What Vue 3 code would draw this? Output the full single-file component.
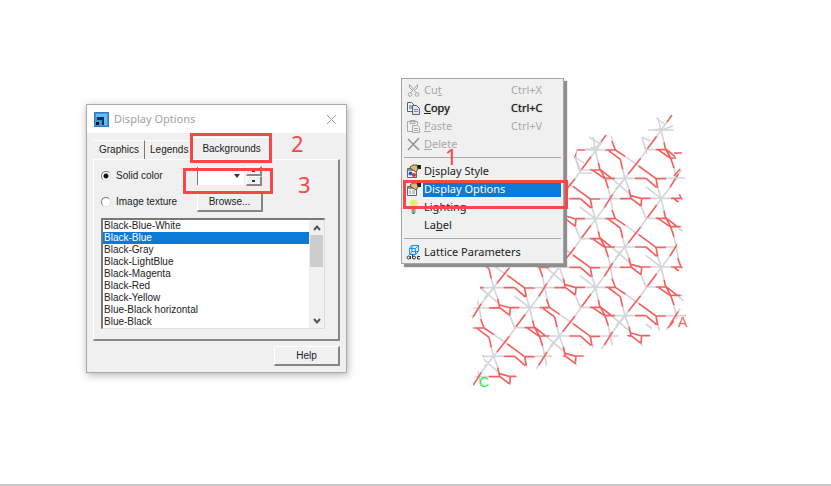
<script setup>
import { ref } from 'vue'

const tabs = ['Graphics', 'Legends', 'Backgrounds']
const gradients = [
  'Black-Blue-White', 'Black-Blue', 'Black-Gray', 'Black-LightBlue', 'Black-Magenta',
  'Black-Red', 'Black-Yellow', 'Blue-Black horizontal', 'Blue-Black',
]
const selected = ref('Black-Blue')
const fill = ref('solid')

const menuGroups = [
  [
    { pre: 'Cu', key: 't', post: '', hint: 'Ctrl+X', icon: 'cut', off: true },
    { pre: '', key: 'C', post: 'opy', hint: 'Ctrl+C', icon: 'copy', strong: true },
    { pre: '', key: 'P', post: 'aste', hint: 'Ctrl+V', icon: 'paste', off: true },
    { pre: '', key: 'D', post: 'elete', icon: 'delete', off: true },
  ],
  [
    { pre: 'D', key: 'i', post: 'splay Style', icon: 'style' },
    { pre: 'Display Options', key: '', post: '', icon: 'options', active: true },
    { pre: 'Li', key: 'g', post: 'hting', icon: 'light' },
    { pre: 'La', key: 'b', post: 'el', icon: '' },
  ],
  [{ pre: 'Lattice Parameters', key: '', post: '', icon: 'lattice' }],
]

// Bonds of one unit cell; lattice vectors are (197,-61) and (0,206)
const greyBonds = [
  [0, 0, 30, 0], [-74, 61, -15, 61], [77, 60, 138, 60], [190, 118, 197, 145],
  [198, 80, 238, 108], [-30, 0, 0, 0], [-135, -25, -105, -25], [-50, 30, -37, 94],
  [-43, -2, 12, 45], [0, 0, 12, 33], [48, 83, 63, 120], [0, 0, -37, 48],
  [-62, 88, -102, 141], [-133, 183, -150, 207], [-187, 254, -197, 267],
  [108, 60, 117, 98], [108, 60, 97, 23], [62, 25, 108, 60], [-28, 32, 0, 0],
]
const redBonds = [
  [30, 0, 63, 0], [93, 1, 123, 1], [-15, 61, 18, 60], [50, 60, 77, 60], [138, 60, 168, 60],
  [168, 60, 158, 33], [168, 60, 198, 80], [148, 62, 183, 88], [183, 88, 190, 118],
  [41, -37, 93, 1], [63, 0, 95, 28], [93, 1, 98, 28], [-60, 0, -30, 0], [-60, 0, -75, -27],
  [-105, -25, -75, -25], [-75, -27, -43, -2], [-98, -25, -62, 0], [-60, 0, -50, 30],
  [12, 33, 18, 60], [18, 60, 48, 83], [18, 52, 50, 61], [48, 83, 50, 60],
  [-37, 48, -62, 88], [-102, 141, -133, 183], [-150, 207, -187, 254],
  [117, 98, 122, 120], [97, 23, 93, 1],
]
const toPath = (bonds) => bonds.map(([a, b, c, d]) => `M${a} ${b}L${c} ${d}`).join('')
const greyPath = toPath(greyBonds)
const redPath = toPath(redBonds)
const cells = []
for (let i = -4; i <= 2; i++) {
  for (let j = -4; j <= 5; j++) cells.push({ id: `${i}:${j}`, x: 459 + i * 197, y: 426 - i * 61 + j * 206 })
}
</script>

<template>
  <main class="scene">
    <section class="dialog" aria-label="Display Options">
      <header class="titlebar">
        <svg class="app-icon" viewBox="0 0 15 15" aria-hidden="true">
          <rect width="15" height="15" fill="#3f97de" />
          <path d="M2 2h11v11h-3V5H2z" fill="#63bdf7" />
          <path d="M3 5h7v8H8V8H3z" fill="#17324d" />
          <path d="M2 10h3v3H2z" fill="#0b0f18" />
          <path d="M.5 .5h14v14H.5z" fill="none" stroke="#3a78b5" />
        </svg>
        <h1>Display Options</h1>
        <button class="close" type="button" aria-label="Close">
          <svg viewBox="0 0 11 11"><path d="M1 1l9 9M10 1l-9 9" stroke="#a0a0a0" fill="none" /></svg>
        </button>
      </header>

      <div class="content">
        <div class="tabs" role="tablist">
          <button v-for="t in tabs" :key="t" type="button" role="tab" :aria-selected="t === 'Backgrounds'" :class="{ current: t === 'Backgrounds' }">{{ t }}</button>
          <span class="mark mark-tab"></span>
          <span class="step step-two">2</span>
        </div>
        <div class="panel">
          <div class="row">
            <label><input v-model="fill" type="radio" value="solid" name="fill">Solid color</label>
            <div class="picker">
              <select aria-label="Solid color"><option></option></select>
              <svg class="arrow" viewBox="0 0 6 4" aria-hidden="true"><path d="M0 0h6L3 4z" fill="#333" /></svg>
              <div class="spin">
                <button type="button" aria-label="Increase"><i></i></button>
                <button type="button" aria-label="Decrease"><i></i></button>
              </div>
              <span class="mark mark-color"></span>
              <span class="step step-three">3</span>
            </div>
          </div>
          <div class="row">
            <label><input v-model="fill" type="radio" value="image" name="fill">Image texture</label>
            <button class="push" type="button">Browse...</button>
          </div>
          <div class="listbox">
            <ul role="listbox" aria-label="Gradients">
              <li v-for="g in gradients" :key="g" role="option" :aria-selected="g === selected" :class="{ picked: g === selected }" @click="selected = g">{{ g }}</li>
            </ul>
            <div class="scroll">
              <svg viewBox="0 0 8 6"><path d="M1 5l3-3.500 3 3.500" fill="none" stroke="#555" stroke-width="2" /></svg>
              <div class="thumb"></div>
              <svg viewBox="0 0 8 6"><path d="M1 1l3 3.500 3-3.500" fill="none" stroke="#555" stroke-width="2" /></svg>
            </div>
          </div>
        </div>
        <footer><button class="push" type="button">Help</button></footer>
      </div>
    </section>

    <section class="viewer">
      <svg class="crystal" viewBox="0 0 220 290" aria-hidden="true">
        <defs>
          <clipPath id="bounds">
            <path d="M8 80H90L97 65 106 42 120 42 133 36 137 28 147 40 165 50 172 42 174 34 184 23 196 24 200 42 205 56 212 70 204 75 200 86 214 92 202 100 206 116 212 125 204 134 206 145 214 160 202 170 207 184 213 194 206 202 214 208 214 212 204 214 197 228 190 220 187 227 181 218 178 232 172 242 160 236 150 225 141 240 131 244 120 243 108 236 112 252 106 262 94 255 85 243 74 262 64 264 60 254 55 263 40 258 44 270 48 284 38 280 18 274 2 282 0 276 12 256 8 240 0 226 0 205 8 192Z" />
          </clipPath>
        </defs>
        <g clip-path="url(#bounds)">
          <g fill="none" stroke-width="5" transform="scale(.33333)">
            <g v-for="c in cells" :key="c.id" :transform="`translate(${c.x} ${c.y})`">
              <path :d="greyPath" stroke="#d3d6db" />
              <path :d="redPath" stroke="#f4605f" />
            </g>
          </g>
        </g>
        <g fill="none" stroke="#d3d6db" stroke-width="1.500">
          <path d="M117 32l11 7M113 44h14M121 32l2 12 6-7M103 52l5 16h12M103 52l9 6M184 13l10 7M176 25h26M186 13l3 12 7-9M170 32l5 17M170 32l8 4M189 25l12-4M201 73h12" />
          <path d="M129 37l5-7M195 17l5-7M202 71l6-7M202 48h8M196 223l6-7" stroke="#f4605f" />
        </g>
      </svg>
      <span class="axis axis-a">A</span>
      <span class="axis axis-c">C</span>

      <nav class="menu" aria-label="Context menu">
        <ul v-for="(group, gi) in menuGroups" :key="gi">
          <li v-for="m in group" :key="m.pre + m.key">
            <button type="button" :disabled="m.off" :class="{ active: m.active, strong: m.strong }">
              <span class="icon">
                <svg v-if="m.icon" viewBox="0 0 15 15" aria-hidden="true">
                  <g v-if="m.icon === 'cut'" fill="none" stroke="#a6a6a6">
                    <path d="M3.500 1.500l7 8.500M11.500 1.500L4.500 10M3.500 1.500v3l3 3M11.500 1.500v3l-3 3" /><circle cx="4" cy="11.500" r="1.800" /><circle cx="11" cy="11.500" r="1.800" />
                  </g>
                  <g v-else-if="m.icon === 'copy'" stroke="#59606e">
                    <path d="M1.500 1.500h4l3 3v6h-7z" fill="#eef2f8" /><path d="M3 5h3M3 7h3" />
                    <path d="M6.500 4.500h4l3 3v6h-7z" fill="#dfe6f2" /><path d="M8 8.500h4M8 10.500h4" stroke="#6d87b8" />
                  </g>
                  <g v-else-if="m.icon === 'paste'" fill="none" stroke="#a9a9a9">
                    <path d="M1.500 2.500h10v3M1.500 2.500v10h5M4 4.500v-3h5v3z" /><path d="M6.500 6.500h5l2 2v5h-7zM8 9.500h4M8 11.500h4" />
                  </g>
                  <path v-else-if="m.icon === 'delete'" d="M2 2l11 11M13 1L2 13" fill="none" stroke="#929292" stroke-width="1.500" />
                  <g v-else-if="m.icon === 'style' || m.icon === 'options'">
                    <path d="M1.500 4.500h9v9h-9z" fill="#f6f6f6" stroke="#666" />
                    <path d="M2 5h8v2H2z" fill="#8a93a5" />
                    <path d="M4 3l3-2h4l1 4-2 3-3-2-2-1z" fill="#d8bd78" stroke="#5c5138" />
                    <path d="M11 1h4v4h-3z" fill="#222" />
                    <template v-if="m.icon === 'style'"><circle cx="4.500" cy="9.500" r="2" fill="#2b55d8" /><circle cx="8" cy="11" r="2" fill="#e32828" /></template>
                    <path v-else d="M3 9h2M6 9h3M3 11h2M6 11h3" stroke="#8194b3" />
                  </g>
                  <g v-else-if="m.icon === 'light'">
                    <path d="M5 0h5l2 3-2 4H6L4 3z" fill="#f3e86a" /><path d="M6 8h3M5.500 10h4M5.500 12h4M6.500 13.500h2" stroke="#444" />
                  </g>
                  <g v-else>
                    <path d="M3.500 3.500l2-3h7v6l-3 3h-6zM3.500 3.500h6v6M9.500 3.500l3-3M6 1v6L4 9M6 6.500h6" fill="#d9efff" stroke="#2d8de0" />
                    <g fill="none" stroke="#333"><circle cx="2.500" cy="12.500" r="1.500" /><path d="M4.500 11v3M6.500 9.500v4" /><circle cx="8" cy="12.500" r="1.500" /><path d="M14 11.500h-2.500v2.500H14" /></g>
                  </g>
                </svg>
              </span>
              <span class="name">{{ m.pre }}<u>{{ m.key }}</u>{{ m.post }}</span>
              <span v-if="m.hint" class="hint">{{ m.hint }}</span>
            </button>
          </li>
        </ul>
        <span class="mark mark-menu"></span>
        <span class="step step-one">1</span>
      </nav>
    </section>
  </main>
</template>

<style>
body { background: #fff; }
</style>

<style scoped>
* { box-sizing: border-box; }
button, select, input { margin: 0; padding: 0; border: 0; font: inherit; color: inherit; background: none; }
ul { margin: 0; padding: 0; list-style: none; }
.scene {
  display: flex; align-items: flex-start; gap: 54px; min-height: 100vh; padding: 78px 0 0 86px;
  border-bottom: 2px solid #c9c9c9; font: 10px/12px "Liberation Sans", Arial, sans-serif; color: #222;
}
.dialog { width: 261px; flex: none; margin-top: 26px; border: 1px solid #a9a9a9; background: #f0f0f0; box-shadow: 1px 2px 8px rgba(0, 0, 0, .3); }
.titlebar { display: flex; align-items: center; gap: 5px; height: 28px; padding: 0 9px 0 7px; background: #fff; }
.app-icon { width: 15px; height: 15px; }
h1 { flex: 1; margin: 0; font: 11px/16px "Noto Sans", sans-serif; color: #a2a2a2; }
.close { display: flex; }
.close svg { width: 11px; height: 11px; }
.content { padding: 4px 6px 6px; }
.tabs { position: relative; display: flex; align-items: flex-end; height: 22px; }
.tabs button { height: 19px; padding: 0 5px 0 6px; border-top: 1px solid #fff; border-right: 1px solid #777; }
.tabs button:nth-child(2) { padding: 0 5px; border-right: 0; }
.tabs button.current { height: 22px; padding: 0 9px; border-right: 2px solid #888; }
.panel { display: flex; flex-direction: column; padding: 3px 13px 10px 7px; border: solid; border-width: 1px 2px 2px 1px; border-color: #fff #888 #888 #fff; }
.row { display: flex; align-items: center; height: 26px; }
.row label { display: flex; align-items: center; gap: 5px; width: 96px; }
input[type="radio"] { appearance: none; width: 10px; height: 10px; border: 1px solid; border-color: #777 #ddd #ddd #777; border-radius: 50%; background: #fff; }
input[type="radio"]:checked { background: radial-gradient(circle, #111 2px, #fff 3px); }
.picker { position: relative; display: flex; align-items: center; gap: 2px; }
.picker select { appearance: none; width: 47px; height: 18px; border-left: 1px solid #777; background: #fff; }
.arrow { position: absolute; left: 37px; top: 8px; width: 6px; height: 4px; }
.spin { display: flex; flex-direction: column; }
.spin button { display: flex; align-items: center; justify-content: center; width: 16px; height: 10px; border: solid; border-width: 1px 2px 2px 1px; border-color: #fff #888 #888 #fff; }
.spin i { width: 3px; height: 2px; background: #333; }
.push { width: 66px; height: 20px; border: solid; border-width: 1px 2px 2px 1px; border-color: #fff #858585 #858585 #fff; background: #f0f0f0; }
.listbox { display: flex; height: 111px; margin-top: 3px; border: solid; border-width: 2px 1px 1px 2px; border-color: #777 #ddd #ddd #777; background: #fff; }
.listbox ul { flex: 1; }
.listbox li { height: 12px; padding-left: 1px; white-space: nowrap; }
.listbox .picked { background: #0b79d6; color: #fff; }
.scroll { display: flex; flex-direction: column; align-items: center; width: 15px; padding: 5px 0 4px; background: #f0f0f0; }
.scroll svg { width: 8px; height: 6px; }
.thumb { width: 13px; height: 32px; margin: 4px 0 auto; background: #cdcdcd; }
footer { display: flex; justify-content: flex-end; padding-top: 5px; }

.viewer { position: relative; width: 285px; flex: none; }
.crystal { position: absolute; left: 71px; top: 27px; width: 220px; height: 290px; }
.axis { position: absolute; font: 14px/14px "Liberation Sans", Arial, sans-serif; }
.axis-a { left: 277px; top: 237px; color: #f4605f; }
.axis-c { left: 78px; top: 297px; color: #33e640; }
.menu { position: relative; width: 163px; padding: 2px; border: 1px solid #a5a5a5; background: #f0f0f0; box-shadow: 3px 3px 1px #8e8e8e; font: 11px/18px "Noto Sans", sans-serif; }
.menu ul + ul { margin-top: 4px; padding-top: 4px; border-top: 1px solid #aaa; }
.menu button { display: flex; align-items: center; width: 100%; height: 18px; text-align: left; }
.icon { display: flex; justify-content: center; width: 19px; height: 18px; align-items: center; }
.icon svg { width: 15px; height: 15px; }
.name { flex: 1; height: 16px; padding-left: 1px; line-height: 16px; white-space: nowrap; }
.hint { width: 50px; }
.menu button:disabled { color: #a8a8a8; }
.menu .strong { text-shadow: 0 0 1px #555; }
.active .name { background: #0b79d6; color: #fff; }

.mark { position: absolute; border: 3px solid #f94748; pointer-events: none; }
.mark-tab { left: 97px; top: -4px; width: 82px; height: 30px; }
.mark-color { left: -14px; top: 2px; width: 90px; height: 26px; }
.mark-menu { left: 1px; top: 101px; width: 165px; height: 29px; }
.step { position: absolute; font: 22px/24px "Noto Sans", sans-serif; color: #f94748; }
.step-two { left: 198px; top: -6px; }
.step-three { left: 101px; top: 6px; }
.step-one { left: 43px; top: 65px; }
</style>
